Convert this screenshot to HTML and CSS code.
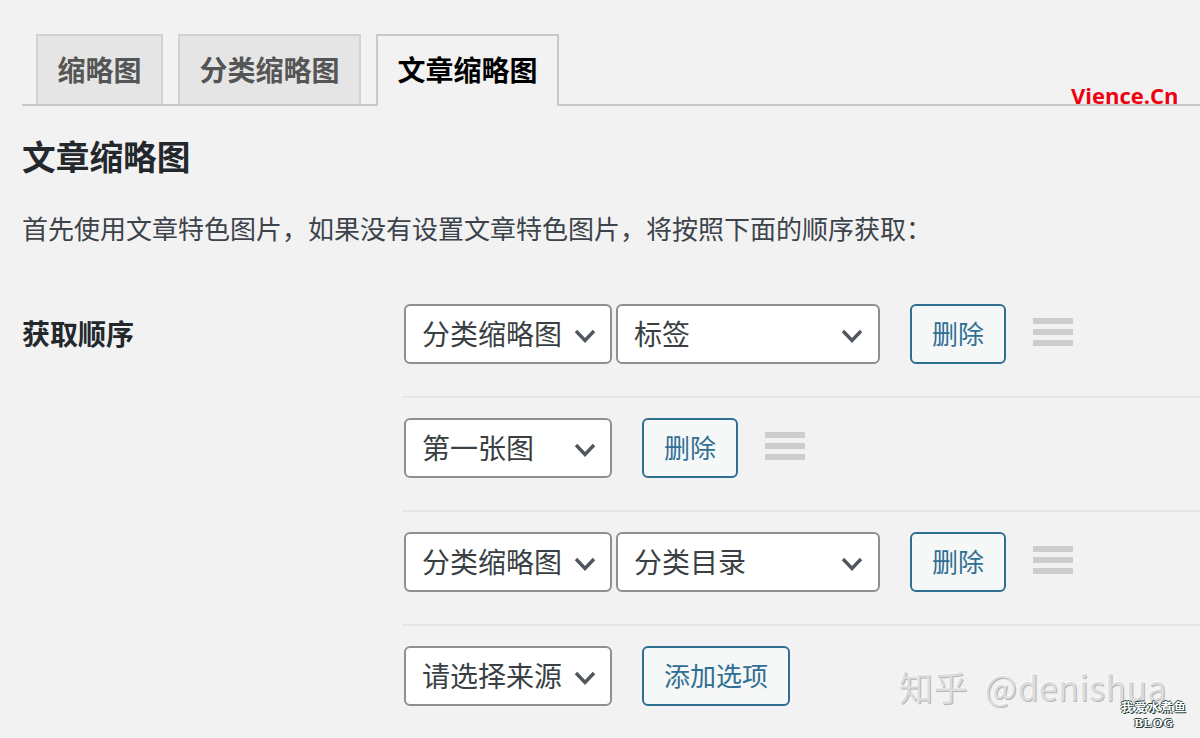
FILE: index.html
```html
<!DOCTYPE html>
<html lang="zh-CN">
<head>
<meta charset="utf-8">
<title>文章缩略图</title>
<link rel="stylesheet" href="styles.css">
</head>
<body>
<main class="page">
  <nav class="tabs">
    <a class="tab">缩略图</a>
    <a class="tab">分类缩略图</a>
    <a class="tab active">文章缩略图</a>
  </nav>
  <h2 class="title">文章缩略图</h2>
  <p class="desc">首先使用文章特色图片，如果没有设置文章特色图片，将按照下面的顺序获取：</p>
  <section class="form">
    <div class="label">获取顺序</div>
    <div class="rows">
      <div class="row">
        <div class="select sm"><span>分类缩略图</span><svg class="chev" viewBox="0 0 22 14"><path d="M2 2l9 9.500 9-9.500"/></svg></div>
        <div class="select lg"><span>标签</span><svg class="chev" viewBox="0 0 22 14"><path d="M2 2l9 9.500 9-9.500"/></svg></div>
        <button class="btn">删除</button>
        <svg class="drag" viewBox="0 0 40 28"><rect width="40" height="6"/><rect y="11" width="40" height="6"/><rect y="22" width="40" height="6"/></svg>
      </div>
      <div class="row">
        <div class="select sm"><span>第一张图</span><svg class="chev" viewBox="0 0 22 14"><path d="M2 2l9 9.500 9-9.500"/></svg></div>
        <button class="btn">删除</button>
        <svg class="drag" viewBox="0 0 40 28"><rect width="40" height="6"/><rect y="11" width="40" height="6"/><rect y="22" width="40" height="6"/></svg>
      </div>
      <div class="row">
        <div class="select sm"><span>分类缩略图</span><svg class="chev" viewBox="0 0 22 14"><path d="M2 2l9 9.500 9-9.500"/></svg></div>
        <div class="select lg"><span>分类目录</span><svg class="chev" viewBox="0 0 22 14"><path d="M2 2l9 9.500 9-9.500"/></svg></div>
        <button class="btn">删除</button>
        <svg class="drag" viewBox="0 0 40 28"><rect width="40" height="6"/><rect y="11" width="40" height="6"/><rect y="22" width="40" height="6"/></svg>
      </div>
      <div class="row">
        <div class="select sm"><span>请选择来源</span><svg class="chev" viewBox="0 0 22 14"><path d="M2 2l9 9.500 9-9.500"/></svg></div>
        <button class="btn">添加选项</button>
      </div>
    </div>
  </section>
</main>
<div class="mark-vience">Vience.Cn</div>
<div class="mark-zhihu">知乎 @denishua</div>
<div class="mark-blog"><span class="blog-cn">我爱水煮鱼</span><span class="blog-en">BLOG</span></div>
</body>
</html>
```
FILE: styles.css
```css
* { box-sizing: border-box; }
html, body { margin: 0; height: 738px; overflow: hidden; }
body {
  background: #f2f2f2;
  color: #23282d;
  font-family: "Noto Sans CJK SC", "Noto Sans", sans-serif;
  position: relative;
}
.page { padding: 34px 0 0 22px; }
.tabs {
  display: flex;
  height: 72px;
  padding-left: 14px;
  gap: 15px;
  border-bottom: 2px solid #c8c9cb;
}
.tab {
  display: block;
  height: 70px;
  padding: 0 19.500px;
  border: 2px solid #d2d2d3;
  border-bottom: none;
  background: #e5e5e5;
  color: #555;
  font-size: 28px;
  font-weight: 700;
  line-height: 66px;
}
.tab.active {
  height: 72px;
  background: #f2f2f2;
  color: #000;
  border-color: #c8c9cb;
}
.title {
  margin: 27px 0 0 0;
  font-size: 33.700px;
  font-weight: 700;
  line-height: 46px;
  color: #23282d;
}
.desc {
  margin: 29px 0 0 0;
  font-size: 26px;
  line-height: 40px;
  color: #3c434a;
}
.form {
  display: grid;
  grid-template-columns: 380px 1fr;
  margin-top: 56px;
}
.label {
  padding-top: 9px;
  font-size: 28px;
  font-weight: 700;
  line-height: 40px;
  color: #23282d;
}
.rows { display: flex; flex-direction: column; }
.row {
  display: flex;
  align-items: flex-start;
  padding: 0 0 32px 2px;
  margin-bottom: 20px;
  border-bottom: 2px solid #e7e7e8;
}
.row:last-child { border-bottom: none; }
.select {
  display: flex;
  align-items: center;
  justify-content: space-between;
  height: 60px;
  padding: 0 14px 3px 16px;
  background: #fff;
  border: 2px solid #8c8f94;
  border-radius: 6px;
  font-size: 28px;
  color: #3a3f44;
}
.select.sm { width: 208px; }
.select.lg { width: 264px; margin-left: 4px; margin-right: 30px; padding-left: 16px; padding-right: 15px; }
.select.sm + .btn { margin-left: 30px; }
.chev { width: 22px; height: 14px; flex: none; margin-top: 6px; fill: none; stroke: #50575e; stroke-width: 3.400; }
.btn {
  height: 60px;
  padding: 0 20px 3px;
  background: #f6f7f7;
  border: 2px solid #2f6f93;
  border-radius: 6px;
  color: #2f6f93;
  font: 400 26px "Noto Sans CJK SC", "Noto Sans", sans-serif;
}
.drag { width: 40px; height: 28px; margin-left: 27px; margin-top: 14px; fill: #cdcdce; }
.mark-vience {
  position: absolute;
  left: 1071px;
  top: 80px;
  color: #f0000f;
  font: 700 22px/30px "Open Sans", sans-serif;
}
.mark-zhihu {
  position: absolute;
  left: 899px;
  top: 664px;
  color: #dcdcdd;
  font-size: 34px;
  line-height: 46px;
  letter-spacing: 0.400px;
  word-spacing: 9px;
  white-space: nowrap;
  text-shadow: 1px 1px 0 #b5b5b6, -1px -1px 0 #fbfbfb;
}
.mark-blog {
  position: absolute;
  left: 1120px;
  top: 698px;
  width: 68px;
  display: flex;
  flex-direction: column;
  align-items: center;
  color: #fff;
  font-weight: 700;
  white-space: nowrap;
  text-shadow: 1px 1px 0 #14322f, -1px 0 0 #1e3a3a, 0 -1px 0 #1e3a3a;
}
.blog-cn { font-size: 12px; line-height: 18px; letter-spacing: 1.200px; }
.blog-en { font: 700 13px/13px "Liberation Serif", serif; letter-spacing: 0.500px; }
```
